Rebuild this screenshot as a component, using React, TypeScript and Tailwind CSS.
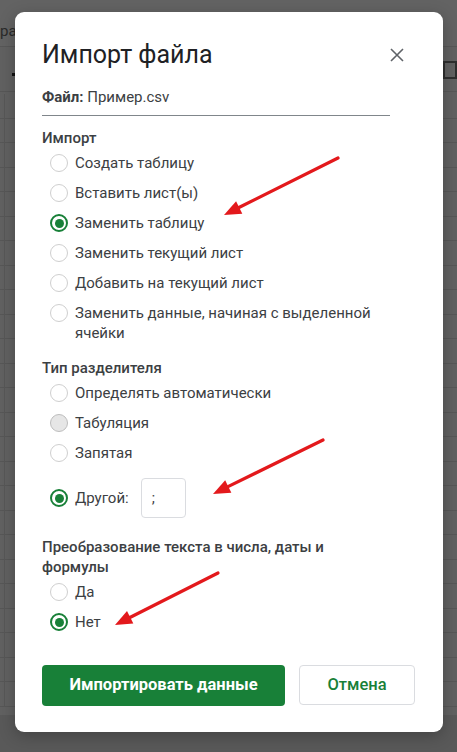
import React from "react";

const font = { fontFamily: "Roboto, 'Noto Sans', Arial, sans-serif" };

function Radio({ checked, muted }: { checked?: boolean; muted?: boolean }) {
  if (checked) {
    return (
      <span className="block shrink-0 w-[18px] h-[18px] rounded-full border-2 border-[#188038] flex items-center justify-center">
        <span className="block w-[9px] h-[9px] rounded-full bg-[#188038]" />
      </span>
    );
  }
  return (
    <span
      className={
        muted
          ? "block shrink-0 w-[18px] h-[18px] rounded-full border border-[#bdbdbd] bg-[#e6e6e6]"
          : "block shrink-0 w-[18px] h-[18px] rounded-full border border-[#cfcfcf] bg-white"
      }
    />
  );
}

function Option({ label, checked, muted }: { label: React.ReactNode; checked?: boolean; muted?: boolean }) {
  return (
    <div className="flex items-start gap-[7px] pl-[8px] py-[5px]">
      <span className="block shrink-0 mt-[1px]">
        <Radio checked={checked} muted={muted} />
      </span>
      <span className="text-[15px] leading-[20px] text-[#3c4043]">{label}</span>
    </div>
  );
}

function Arrow({ x1, y1, x2, y2 }: { x1: number; y1: number; x2: number; y2: number }) {
  const dx = x2 - x1;
  const dy = y2 - y1;
  const len = Math.hypot(dx, dy);
  const ux = dx / len;
  const uy = dy / len;
  const hl = 17;
  const hw = 7;
  const bx = x2 - ux * hl;
  const by = y2 - uy * hl;
  const pts = `${x2},${y2} ${bx - uy * hw},${by + ux * hw} ${bx + uy * hw},${by - ux * hw}`;
  return (
    <g>
      <line x1={x1} y1={y1} x2={bx + ux * 2} y2={by + uy * 2} stroke="#e3191c" strokeWidth={3.2} strokeLinecap="round" />
      <polygon points={pts} fill="#e3191c" />
    </g>
  );
}

const rows = Array.from({ length: 25 });

export default function App() {
  return (
    <div className="relative w-[457px] h-[752px] overflow-hidden bg-[#616161]" style={font}>
      {/* dimmed spreadsheet behind the dialog */}
      <div className="absolute inset-0 flex flex-col">
        <div className="h-[47px] border-b border-[#575757] bg-[#636363] pt-[20px] text-[15px] text-[#2a2a2a]">
          ра
        </div>
        <div className="h-[45px] border-b border-[#575757] relative">
          <span className="absolute left-[12px] top-[26px] w-[4px] h-[3px] bg-[#111]" />
          <span className="absolute left-[443px] top-[14px] w-[14px] h-[18px] border-2 border-[#2e2e2e]" />
        </div>
        <div className="flex-1 flex flex-col pt-[2px]">
          {rows.map((_, i) => (
            <div key={i} className="h-[24.5px] shrink-0 border-b border-[#575757] flex">
              <div className="w-[5px] border-r border-[#575757]" />
              <div className="w-[25px] border-r border-[#5a5a5a]" />
            </div>
          ))}
        </div>
        <div className="h-[37px] shrink-0 bg-[#595959]" />
      </div>

      {/* dialog */}
      <div className="absolute left-[15px] top-[12px] w-[428px] rounded-[9px] bg-white pl-[27px] pr-[28px] pt-[27px] pb-[26px] shadow-[0_4px_16px_rgba(0,0,0,0.25)]">
        <div className="flex items-center justify-between">
          <h1 className="text-[25px] leading-[32px] text-[#202124] font-normal">Импорт файла</h1>
          <svg width="14" height="14" viewBox="0 0 14 14" className="mr-[11px]">
            <path d="M1 1 L13 13 M13 1 L1 13" stroke="#5f6368" strokeWidth="1.6" />
          </svg>
        </div>

        <div className="mt-[16px] w-[348px] border-b border-[#80868b] pb-[8px] text-[15px] leading-[20px] text-[#3c4043]">
          <span className="font-bold">Файл:</span> Пример.csv
        </div>

        <div className="mt-[12px] text-[15px] leading-[20px] font-medium text-[#3c4043]">Импорт</div>
        <div className="flex flex-col">
          <Option label="Создать таблицу" />
          <Option label="Вставить лист(ы)" />
          <Option label="Заменить таблицу" checked />
          <Option label="Заменить текущий лист" />
          <Option label="Добавить на текущий лист" />
          <Option label={<>Заменить данные, начиная с выделенной<br />ячейки</>} />
        </div>

        <div className="mt-[10px] text-[15px] leading-[20px] font-medium text-[#3c4043]">Тип разделителя</div>
        <div className="flex flex-col">
          <Option label="Определять автоматически" />
          <Option label="Табуляция" muted />
          <Option label="Запятая" />
          <div className="mt-[10px] flex items-center gap-[7px] pl-[8px]">
            <Radio checked />
            <span className="text-[15px] leading-[20px] text-[#3c4043]">Другой:</span>
            <div className="ml-[5px] w-[45px] h-[40px] rounded-[4px] border border-[#dadce0] flex items-center pl-[10px] text-[15px] text-[#3c4043]">
              ;
            </div>
          </div>
        </div>

        <div className="mt-[19px] text-[15px] leading-[20px] font-medium text-[#3c4043]">
          Преобразование текста в числа, даты и<br />формулы
        </div>
        <div className="flex flex-col">
          <Option label="Да" />
          <Option label="Нет" checked />
        </div>

        <div className="mt-[28px] flex gap-[14px]">
          <button className="w-[243px] h-[41px] rounded-[4px] bg-[#188038] text-white text-[16.5px] font-bold">
            Импортировать данные
          </button>
          <button className="w-[116px] h-[40px] rounded-[4px] border border-[#dadce0] bg-white text-[#188038] text-[16.5px] font-medium">
            Отмена
          </button>
        </div>
      </div>

      {/* annotation arrows */}
      <svg className="absolute inset-0 pointer-events-none" width="457" height="752">
        <Arrow x1={338} y1={158} x2={224} y2={215} />
        <Arrow x1={323} y1={440} x2={213} y2={494} />
        <Arrow x1={218} y1={573} x2={115} y2={625} />
      </svg>
    </div>
  );
}
